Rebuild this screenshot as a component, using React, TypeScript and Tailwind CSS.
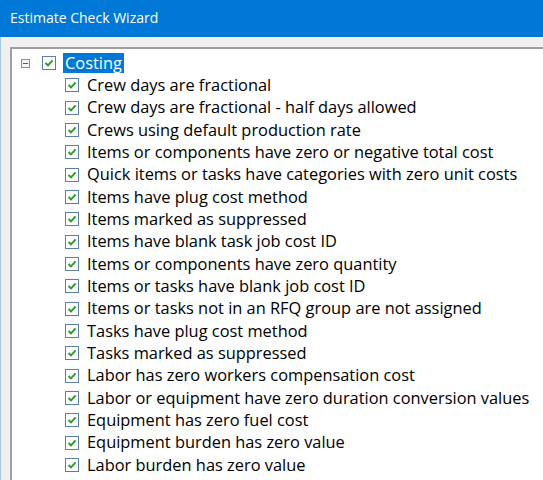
import React from "react";

const items = [
  "Crew days are fractional",
  "Crew days are fractional - half days allowed",
  "Crews using default production rate",
  "Items or components have zero or negative total cost",
  "Quick items or tasks have categories with zero unit costs",
  "Items have plug cost method",
  "Items marked as suppressed",
  "Items have blank task job cost ID",
  "Items or components have zero quantity",
  "Items or tasks have blank job cost ID",
  "Items or tasks not in an RFQ group are not assigned",
  "Tasks have plug cost method",
  "Tasks marked as suppressed",
  "Labor has zero workers compensation cost",
  "Labor or equipment have zero duration conversion values",
  "Equipment has zero fuel cost",
  "Equipment burden has zero value",
  "Labor burden has zero value",
];

function Check() {
  return (
    <span className="flex h-[14px] w-[14px] shrink-0 items-center justify-center border border-[#5a7fa8] bg-white">
      <svg width="10" height="10" viewBox="0 0 10 10">
        <path d="M1.5 5 L4 7.4 L8.6 2.4" stroke="#26a026" strokeWidth="2" fill="none" />
      </svg>
    </span>
  );
}

export default function App() {
  return (
    <div className="relative h-[480px] w-[543px] overflow-hidden bg-[#f0f0f0]" style={{ fontFamily: '"Open Sans", "Noto Sans", sans-serif' }}>
      <div className="flex h-[37px] items-center bg-[#0078d7] pb-[2px] pl-[10px] text-[14px] text-white">
        Estimate Check Wizard
      </div>
      <div className="flex h-[443px]">
        <div className="w-[1px] bg-[#9ec8ec]" />
        <div className="flex-1 pl-[9px] pt-[10px]">
          <div className="h-full border-l-2 border-t-2 border-[#a0a0a0] bg-white">
            <div className="flex h-[25px] items-center pt-[3px]">
              <span className="ml-[9px] flex h-[9px] w-[9px] items-center justify-center border border-[#8e8f8f] bg-[#f4f4f4]">
                <span className="h-[1px] w-[5px] bg-[#5a5a5a]" />
              </span>
              <span className="ml-[12px]"><Check /></span>
              <span className="ml-[7px] bg-[#0078d7] px-[2px] text-[16.4px] leading-[20px] text-white">Costing</span>
            </div>
            {items.map((t) => (
              <div key={t} className="flex h-[22.35px] items-center pl-[53px]">
                <Check />
                <span className="ml-[8px] whitespace-nowrap text-[16.4px] text-black">{t}</span>
              </div>
            ))}
            <div className="flex h-[22.35px] items-center pl-[53px]">
              <span className="h-[14px] w-[14px] border border-[#c9d6e4] bg-white" />
            </div>
          </div>
        </div>
      </div>
    </div>
  );
}
